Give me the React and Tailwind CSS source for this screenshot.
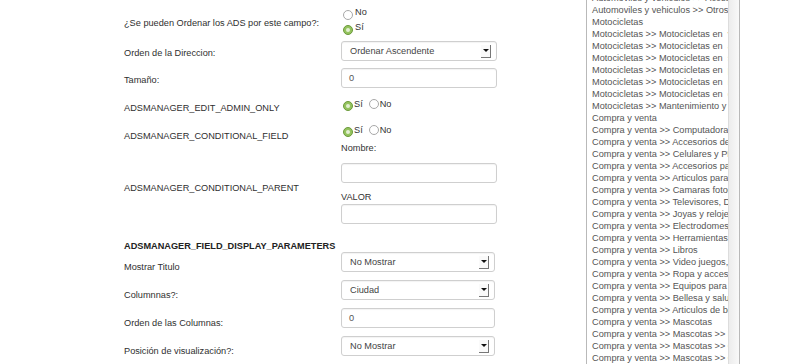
import React from 'react';

const font = { fontFamily: '"Liberation Sans", Arial, sans-serif' };

const listItems = [
  'Automoviles y vehiculos >> Accesorios y repuestos',
  'Automoviles y vehiculos >> Otros vehiculos',
  'Motocicletas',
  'Motocicletas >> Motocicletas en  venta',
  'Motocicletas >> Motocicletas en  alquiler',
  'Motocicletas >> Motocicletas en  subasta',
  'Motocicletas >> Motocicletas en  permuta',
  'Motocicletas >> Motocicletas en  repuesto',
  'Motocicletas >> Motocicletas en  general',
  'Motocicletas >> Mantenimiento y reparacion',
  'Compra y venta',
  'Compra y venta >> Computadoras',
  'Compra y venta >> Accesorios de computadoras',
  'Compra y venta >> Celulares y PDAs',
  'Compra y venta >> Accesorios para celulares',
  'Compra y venta >> Articulos para el hogar',
  'Compra y venta >> Camaras fotograficas',
  'Compra y venta >> Televisores, DVD',
  'Compra y venta >> Joyas y relojes',
  'Compra y venta >> Electrodomesticos',
  'Compra y venta >> Herramientas',
  'Compra y venta >> Libros',
  'Compra y venta >> Video juegos, consolas',
  'Compra y venta >> Ropa y accesorios',
  'Compra y venta >> Equipos para deportes',
  'Compra y venta >> Bellesa y salud',
  'Compra y venta >> Articulos de bebe',
  'Compra y venta >> Mascotas',
  'Compra y venta >> Mascotas >> Perros',
  'Compra y venta >> Mascotas >> Gatos',
  'Compra y venta >> Mascotas >> Otros',
];

const Radio = ({ checked }) =>
  checked ? (
    <span className="inline-flex h-[10px] w-[10px] shrink-0 items-center justify-center rounded-full border border-[#6c9a3c] bg-[#94c35e]">
      <span className="h-[4px] w-[4px] rounded-full bg-[#e3f0d2]" />
    </span>
  ) : (
    <span className="inline-block h-[10px] w-[10px] shrink-0 rounded-full border border-[#a8a8a8] bg-white" />
  );

const Select = ({ value, className }) => (
  <div className={`flex h-[20px] items-center justify-between rounded-[3px] border border-[#cfcfcf] bg-white pl-[8px] pr-[5px] shadow-[inset_0_1px_1px_rgba(0,0,0,0.05)] ${className}`}>
    <span className="text-[9.2px] leading-[12px] text-[#444]">{value}</span>
    <span className="flex h-[13px] w-[10px] items-center justify-center border-r border-b border-[#777] bg-[#fafafa]">
      <span className="h-0 w-0 border-x-[3px] border-t-[3px] border-x-transparent border-t-[#111]" />
    </span>
  </div>
);

const Input = ({ value, className }) => (
  <div className={`flex h-[20px] items-center rounded-[3px] border border-[#cfcfcf] bg-white pl-[7px] shadow-[inset_0_1px_1px_rgba(0,0,0,0.05)] ${className}`}>
    <span className="text-[9.2px] leading-[12px] text-[#555]">{value}</span>
  </div>
);

const Label = ({ children, className }) => (
  <div className={`w-[217px] shrink-0 text-[9.2px] leading-[12px] text-[#2f2f2f] ${className}`}>{children}</div>
);

const InlineRadios = () => (
  <div className="flex items-center text-[9.2px] leading-[12px] text-[#333]">
    <Radio checked />
    <span className="ml-[1px] -translate-y-[2px]">Sí</span>
    <span className="ml-[6px]"><Radio /></span>
    <span className="ml-[1px] -translate-y-[2px]">No</span>
  </div>
);

export default function App() {
  return (
    <div className="flex h-[364px] w-[800px] overflow-hidden bg-white" style={font}>
      {/* Form */}
      <div className="flex w-[586px] shrink-0 flex-col pl-[124px]">
        <div className="flex h-[37px]">
          <Label className="pt-[17px]">¿Se pueden Ordenar los ADS por este campo?:</Label>
          <div className="flex flex-col pt-[7px] pl-[2px] text-[9.2px] text-[#333]">
            <div className="flex h-[16px] items-center gap-[2px]"><Radio /><span className="-translate-y-[2px]">No</span></div>
            <div className="flex h-[16px] items-center gap-[2px]"><Radio checked /><span className="-translate-y-[2px]">Sí</span></div>
          </div>
        </div>

        <div className="flex h-[24px]">
          <Label className="pt-[10px]">Orden de la Direccion:</Label>
          <div className="pt-[4px]"><Select value="Ordenar Ascendente" className="w-[156px]" /></div>
        </div>

        <div className="flex h-[27px]">
          <Label className="pt-[13px]">Tamaño:</Label>
          <div className="pt-[7px]"><Input value="0" className="w-[156px]" /></div>
        </div>

        <div className="flex h-[29px]">
          <Label className="pt-[14px]">ADSMANAGER_EDIT_ADMIN_ONLY</Label>
          <div className="pt-[11px] pl-[2px]"><InlineRadios /></div>
        </div>

        <div className="flex h-[29px]">
          <Label className="pt-[16px]">ADSMANAGER_CONDITIONAL_FIELD</Label>
          <div className="pt-[11px] pl-[2px]"><InlineRadios /></div>
        </div>

        <div className="flex">
          <Label className="pt-[40px]">ADSMANAGER_CONDITIONAL_PARENT</Label>
          <div className="flex flex-col text-[9.2px] leading-[12px] text-[#333]">
            <span>Nombre:</span>
            <Input value="" className="mt-[9px] w-[156px]" />
            <span className="mt-[8px]">VALOR</span>
            <Input value="" className="mt-[1px] w-[156px]" />
          </div>
        </div>

        <div className="mt-[16px] text-[9.2px] font-bold leading-[12px] text-[#222]">
          ADSMANAGER_FIELD_DISPLAY_PARAMETERS
        </div>

        <div className="flex flex-col">
          {[
            ['Mostrar Titulo', 'select', 'No Mostrar'],
            ['Columnnas?:', 'select', 'Ciudad'],
            ['Orden de las Columnas:', 'input', '0'],
            ['Posición de visualización?:', 'select', 'No Mostrar'],
          ].map(([label, kind, value]) => (
            <div key={label} className="flex h-[28px]">
              <Label className="w-[214px] pt-[9px]">{label}</Label>
              {kind === 'select' ? (
                <Select value={value} className="w-[154px]" />
              ) : (
                <Input value={value} className="w-[154px]" />
              )}
            </div>
          ))}
        </div>
      </div>

      {/* Category list box */}
      <div className="flex h-[364px] w-[154px] shrink-0 border-x border-[#b9b9b9]">
        <div className="w-[141px] overflow-hidden pl-[5px]">
          <div className="-mt-[8px] flex flex-col">
            {listItems.map((item, i) => (
              <div key={i} className="h-[12px] whitespace-pre text-[9.2px] leading-[12px] text-[#555]">
                {item}
              </div>
            ))}
          </div>
        </div>
        <div className="w-[11px] border-l border-[#dcdcdc] bg-gradient-to-r from-[#ececec] to-[#f9f9f9]" />
      </div>
    </div>
  );
}
